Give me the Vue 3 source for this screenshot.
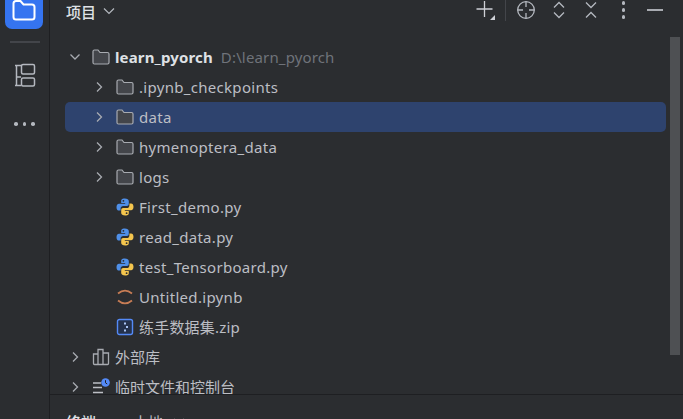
<script setup>
const rows = [
  { name: '.ipynb_checkpoints', kind: 'folder', depth: 1, arrow: true },
  { name: 'data', kind: 'folder', depth: 1, arrow: true, selected: true },
  { name: 'hymenoptera_data', kind: 'folder', depth: 1, arrow: true },
  { name: 'logs', kind: 'folder', depth: 1, arrow: true },
  { name: 'First_demo.py', kind: 'py', depth: 1 },
  { name: 'read_data.py', kind: 'py', depth: 1 },
  { name: 'test_Tensorboard.py', kind: 'py', depth: 1 },
  { name: 'Untitled.ipynb', kind: 'nb', depth: 1 },
  { name: '练手数据集.zip', kind: 'zip', depth: 1 },
  { name: '外部库', kind: 'lib', depth: 0, arrow: true },
  { name: '临时文件和控制台', kind: 'scratch', depth: 0, arrow: true },
]
</script>

<template>
  <div class="ide">
    <aside class="rail">
      <div class="rail-active">
        <svg width="24" height="21" viewBox="0 0 24 21" fill="none" stroke="#fff" stroke-width="2"><path d="M1.5 3.5 Q1.5 1 4 1 H8.5 L11.5 4.5 H20 Q22.5 4.5 22.5 7 V17 Q22.5 19.5 20 19.5 H4 Q1.5 19.5 1.5 17 Z"/></svg>
      </div>
      <div class="rail-sep"></div>
      <svg class="rail-icon" width="22" height="24" viewBox="0 0 22 24" fill="none" stroke="#b4b8bf" stroke-width="1.5"><path d="M1 2.5 H7 M2.5 2.5 V22.5 M1 22.5 H7 M2.5 14 H7"/><rect x="7.5" y="1.5" width="13" height="9.5" rx="1.5"/><rect x="7.5" y="15" width="13" height="8" rx="1.5"/></svg>
      <div class="rail-more"><i></i><i></i><i></i></div>
    </aside>
    <main class="panel">
      <header class="head">
        <span class="title">项目</span>
        <svg class="chev" width="12" height="8" viewBox="0 0 12 8" fill="none" stroke="#b4b8bf" stroke-width="1.2"><path d="M1 1.5 L6 6.5 L11 1.5"/></svg>
        <div class="tools">
          <svg class="plus" width="22" height="22" viewBox="0 0 22 22" fill="none" stroke="#ced0d6" stroke-width="1.3"><path d="M9.5 1 V17 M1.5 9 H17.5"/><path d="M20 15 V20 H15 Z" fill="#ced0d6" stroke="none"/></svg>
          <div class="tool-sep"></div>
          <svg class="tool locate" width="20" height="20" viewBox="0 0 20 20" fill="none" stroke="#b4b8bf" stroke-width="1.3"><circle cx="10" cy="10" r="8.3"/><path d="M10 1.5 V7 M10 13 V18.5 M1.5 10 H7 M13 10 H18.5"/></svg>
          <svg class="tool" width="14" height="18" viewBox="0 0 14 18" fill="none" stroke="#b4b8bf" stroke-width="1.3"><path d="M2 6.5 L7 1.5 L12 6.5 M2 11.5 L7 16.5 L12 11.5"/></svg>
          <svg class="tool" width="14" height="18" viewBox="0 0 14 18" fill="none" stroke="#b4b8bf" stroke-width="1.3"><path d="M2 1.5 L7 6.5 L12 1.5 M2 16.5 L7 11.5 L12 16.5"/></svg>
          <div class="kebab"><i></i><i></i><i></i></div>
          <div class="minimize"></div>
        </div>
      </header>
      <div class="tree-wrap">
        <div class="tree">
          <div class="row root">
            <svg class="arrow" width="14" height="14" viewBox="0 0 14 14" fill="none" stroke="#a8abb1" stroke-width="1.3"><path d="M2.5 4.5 L7 9 L11.5 4.5"/></svg>
            <svg class="file-icon" width="18" height="16" viewBox="0 0 18 16" fill="#43454a" stroke="#a8abb1" stroke-width="1.2"><path d="M1 2.5 Q1 1 2.5 1 H6 L8 3.5 H15.5 Q17 3.5 17 5 V13.5 Q17 15 15.5 15 H2.5 Q1 15 1 13.5 Z"/></svg>
            <span class="name bold">learn_pyorch</span><span class="path">D:\learn_pyorch</span>
          </div>
          <div v-for="r in rows" :key="r.name" class="row" :class="[`depth-${r.depth}`, `kind-${r.kind}`, { selected: r.selected }]">
            <svg v-if="r.arrow" class="arrow" width="14" height="14" viewBox="0 0 14 14" fill="none" stroke="#a8abb1" stroke-width="1.3"><path d="M5 2.5 L9.5 7 L5 11.5"/></svg>
            <span v-else class="arrow-gap"></span>
            <svg v-if="r.kind === 'folder'" class="file-icon" width="18" height="16" viewBox="0 0 18 16" fill="#43454a" stroke="#a8abb1" stroke-width="1.2"><path d="M1 2.5 Q1 1 2.5 1 H6 L8 3.5 H15.5 Q17 3.5 17 5 V13.5 Q17 15 15.5 15 H2.5 Q1 15 1 13.5 Z"/></svg>
            <svg v-else-if="r.kind === 'py'" class="file-icon" width="18" height="18" viewBox="0 0 18 18">
              <path fill="#4f8fe8" d="M8.8 .5 C5.4 .5 5.2 2 5.2 3 V5 H9.2 V5.8 H3 C1.4 5.8 .5 7.2 .5 9.2 C.5 11.4 1.5 12.6 3 12.6 H4.6 V10.6 C4.6 9 5.8 8 7.2 8 H10.8 C12 8 12.8 7.2 12.8 6 V3 C12.8 1.4 11.2 .5 8.8 .5 Z"/>
              <path fill="#f4c54e" d="M9.2 17.5 C12.6 17.5 12.8 16 12.8 15 V13 H8.8 V12.2 H15 C16.6 12.2 17.5 10.8 17.5 8.8 C17.5 6.6 16.5 5.4 15 5.4 H13.4 V7.4 C13.4 9 12.2 10 10.8 10 H7.2 C6 10 5.2 10.8 5.2 12 V15 C5.2 16.6 6.8 17.5 9.2 17.5 Z"/>
              <circle cx="7.4" cy="2.8" r=".9" fill="#2b2d30"/><circle cx="10.6" cy="15.2" r=".9" fill="#2b2d30"/>
            </svg>
            <svg v-else-if="r.kind === 'nb'" class="file-icon" width="18" height="16" viewBox="0 0 18 16" fill="none" stroke="#c77d55" stroke-width="1.8"><path d="M2 4.5 Q9 -1.2 16 4.5 M2 11.5 Q9 17.2 16 11.5"/></svg>
            <svg v-else-if="r.kind === 'zip'" class="file-icon" width="18" height="18" viewBox="0 0 18 18"><rect x="1.5" y="1.5" width="15" height="15" rx="2" fill="#25324d" stroke="#548af7" stroke-width="1.4"/><path d="M8 4.5 H10 V6.5 H8 Z M10 8 H12 V10 H10 Z M8 11.5 H10 V13.5 H8 Z" fill="#a9c4f5"/></svg>
            <svg v-else-if="r.kind === 'lib'" class="file-icon" width="18" height="18" viewBox="0 0 18 18" fill="none" stroke="#a8abb1" stroke-width="1.3"><path d="M1.5 6 H6 V16.5 H2.5 Q1.5 16.5 1.5 15.5 Z M6 1.5 H11 V16.5 H6 Z M11 5 H16.5 V15.5 Q16.5 16.5 15.5 16.5 H11 Z"/></svg>
            <svg v-else class="file-icon" width="18" height="18" viewBox="0 0 18 18"><path d="M1 5 H9 M1 9.5 H10 M1 14.5 H11" fill="none" stroke="#bcbec4" stroke-width="1.3"/><circle cx="13.5" cy="4.5" r="4.3" fill="#548af7"/><path d="M13.5 2.2 V4.8 L15.2 6" fill="none" stroke="#1e1f22" stroke-width="1"/></svg>
            <span class="name">{{ r.name }}</span>
          </div>
        </div>
        <div class="scrollbar"></div>
      </div>
      <footer class="bottom">
        <span class="tab">终端</span>
        <span class="tab second">本地</span>
        <svg width="12" height="7" viewBox="0 0 12 7" fill="none" stroke="#a8abb1" stroke-width="1.2"><path d="M1 1 L6 6 L11 1"/></svg>
      </footer>
    </main>
  </div>
</template>

<style>
html, body { margin: 0; background: #2b2d30; overflow: hidden; }
</style>

<style scoped>
.ide {
  width: 683px;
  height: 419px;
  display: flex;
  overflow: hidden;
  background: #2b2d30;
  color: #bcbec4;
  font: 15px "Noto Sans", "Noto Sans CJK SC", sans-serif;
}
.rail {
  width: 49px;
  flex: none;
  border-right: 1px solid #1e1f22;
  display: flex;
  flex-direction: column;
  align-items: center;
}
.rail-active {
  width: 38px;
  height: 29px;
  margin-left: -1px;
  background: #3574f0;
  border-radius: 0 0 7px 7px;
  display: flex;
  justify-content: center;
  align-items: flex-start;
}
.rail-sep { width: 30px; height: 2px; background: #43454a; margin: 12px 0 20px; }
.rail-more { display: flex; gap: 5px; margin-top: 35px; }
.rail-more i, .kebab i { display: block; width: 3.5px; height: 3.5px; border-radius: 50%; background: #b4b8bf; }
.panel { flex: 1; min-width: 0; display: flex; flex-direction: column; }
.head { height: 22px; display: flex; align-items: center; padding-left: 16px; flex: none; margin-bottom: 15px; }
.title { font-size: 15px; font-weight: 500; color: #dfe1e5; margin-right: 7px; }
.tools { margin-left: auto; display: flex; align-items: center; padding-right: 20px; margin-top: -2px; }
.plus { margin: 1px 8px 0 0; }
.tool-sep { width: 1px; height: 22px; background: #43454a; margin-right: 10px; }
.tool { margin-right: 18px; }
.locate { margin-right: 16px; }
.kebab { display: flex; flex-direction: column; gap: 3.5px; margin: 0 22px 0 6px; }
.minimize { width: 16px; height: 2px; background: #a8abb1; }
.tree-wrap { flex: 1; position: relative; min-height: 0; overflow: hidden; padding: 5px 0 0 15px; }
.tree { width: 601px; }
.row { height: 30px; display: flex; align-items: center; white-space: nowrap; color: #bcbec4; border-radius: 5px; }
.root, .depth-0 { padding-left: 3px; }
.depth-1 { padding-left: 27px; }
.selected { background: #2e436e; }
.arrow, .arrow-gap { width: 14px; flex: none; margin-right: 10px; }
.file-icon { flex: none; margin-right: 5px; }
.depth-1 .name { letter-spacing: .3px; }
.kind-zip .name { letter-spacing: .2px; margin-bottom: 2px; }
.depth-0 .name { margin-bottom: 2px; }
.name.bold { font-weight: 700; color: #dfe1e5; letter-spacing: .15px; }
.path { color: #6f737a; margin-left: 8px; letter-spacing: .15px; }
.scrollbar { position: absolute; right: 3px; top: 0; width: 10px; height: 318px; background: #4e5053; }
.bottom { height: 25px; box-sizing: border-box; flex: none; border-top: 1px solid #1e1f22; display: flex; align-items: flex-start; padding: 16px 0 0 16px; }
.bottom svg { margin: 7px 0 0 10px; }
.tab { font-weight: 500; color: #dfe1e5; line-height: 22px; flex: none; }
.second { margin-left: 37px; font-weight: 400; color: #bcbec4; }
</style>
